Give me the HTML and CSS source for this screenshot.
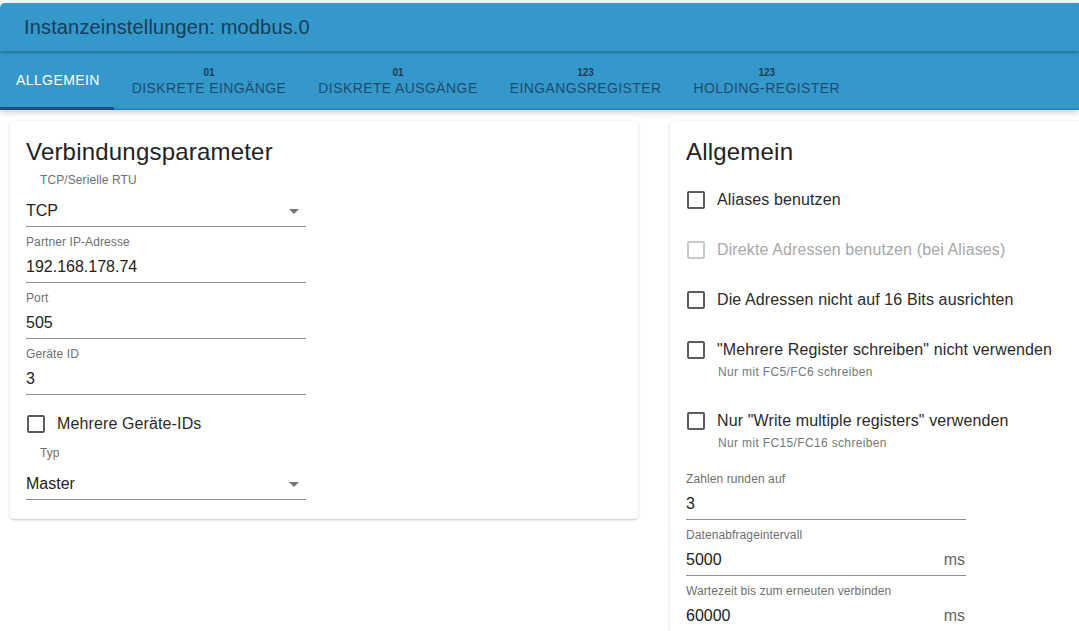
FILE: index.html
```html
<!DOCTYPE html>
<html lang="de">
<head>
<meta charset="utf-8">
<title>Instanzeinstellungen: modbus.0</title>
<link rel="stylesheet" href="styles.css">
</head>
<body>
<div class="page">
  <header class="appbar">Instanzeinstellungen: modbus.0</header>
  <nav class="tabs">
    <div class="tab active"><span class="tab-label">ALLGEMEIN</span></div>
    <div class="tab"><span class="tab-icon">01</span><span class="tab-label">DISKRETE EINGÄNGE</span></div>
    <div class="tab"><span class="tab-icon">01</span><span class="tab-label">DISKRETE AUSGÄNGE</span></div>
    <div class="tab"><span class="tab-icon">123</span><span class="tab-label">EINGANGSREGISTER</span></div>
    <div class="tab"><span class="tab-icon">123</span><span class="tab-label">HOLDING-REGISTER</span></div>
  </nav>
  <main class="content">
    <section class="card">
      <h2 class="card-title">Verbindungsparameter</h2>
      <div class="field select first">
        <div class="label">TCP/Serielle RTU</div>
        <div class="value">TCP<span class="arrow"></span></div>
      </div>
      <div class="field">
        <div class="label">Partner IP-Adresse</div>
        <div class="value">192.168.178.74</div>
      </div>
      <div class="field">
        <div class="label">Port</div>
        <div class="value">505</div>
      </div>
      <div class="field">
        <div class="label">Geräte ID</div>
        <div class="value">3</div>
      </div>
      <div class="check left-check">
        <span class="box"></span><span class="check-label">Mehrere Geräte-IDs</span>
      </div>
      <div class="field select after-check">
        <div class="label">Typ</div>
        <div class="value">Master<span class="arrow"></span></div>
      </div>
    </section>
    <section class="card">
      <h2 class="card-title">Allgemein</h2>
      <div class="checks">
        <div class="item">
          <div class="check"><span class="box"></span><span class="check-label">Aliases benutzen</span></div>
        </div>
        <div class="item disabled">
          <div class="check"><span class="box"></span><span class="check-label">Direkte Adressen benutzen (bei Aliases)</span></div>
        </div>
        <div class="item">
          <div class="check"><span class="box"></span><span class="check-label">Die Adressen nicht auf 16 Bits ausrichten</span></div>
        </div>
        <div class="item">
          <div class="check"><span class="box"></span><span class="check-label">"Mehrere Register schreiben" nicht verwenden</span></div>
          <div class="help">Nur mit FC5/FC6 schreiben</div>
        </div>
        <div class="item">
          <div class="check"><span class="box"></span><span class="check-label">Nur "Write multiple registers" verwenden</span></div>
          <div class="help">Nur mit FC15/FC16 schreiben</div>
        </div>
      </div>
      <div class="field after-checks">
        <div class="label">Zahlen runden auf</div>
        <div class="value">3</div>
      </div>
      <div class="field">
        <div class="label">Datenabfrageintervall</div>
        <div class="value">5000<span class="unit">ms</span></div>
      </div>
      <div class="field">
        <div class="label">Wartezeit bis zum erneuten verbinden</div>
        <div class="value">60000<span class="unit">ms</span></div>
      </div>
    </section>
  </main>
</div>
</body>
</html>
```
FILE: styles.css
```css
* { box-sizing: border-box; }
html, body {
  margin: 0;
  padding: 0;
  background: #ffffff;
  overflow: hidden;
}
body {
  font-family: "Liberation Sans", Arial, sans-serif;
  color: #222;
}
.page {
  padding-top: 3px;
  background: #f3f5f7;
  height: 631px;
}
.appbar {
  position: relative;
  z-index: 2;
  height: 48px;
  background: #3498cb;
  border-top-left-radius: 5px;
  color: #163d5b;
  font-size: 20px;
  letter-spacing: 0.15px;
  line-height: 48px;
  padding-left: 24px;
  box-shadow: 0 2px 3px rgba(0, 0, 0, 0.25);
}
.tabs {
  position: relative;
  z-index: 1;
  display: flex;
  height: 59px;
  background: #3498cb;
  border-bottom: 2px solid #2c86b6;
  box-shadow: 0 2px 6px rgba(0, 0, 0, 0.22);
}
.tab {
  display: flex;
  flex-direction: column;
  align-items: center;
  justify-content: center;
  padding: 3px 16px 0 16px;
  color: #1d4d70;
  position: relative;
}
.tab.active {
  color: #ffffff;
  padding-top: 1px;
}
.tab.active::after {
  content: "";
  position: absolute;
  left: 0;
  right: 2px;
  bottom: -2px;
  height: 3px;
  background: #1b4f7d;
}
.tab-icon {
  font-size: 10px;
  line-height: 12px;
  font-weight: bold;
  margin-bottom: 1px;
  color: #1d3d55;
}
.tab-label {
  font-size: 14px;
  line-height: 16px;
  letter-spacing: 0.4px;
}
.content {
  display: grid;
  grid-template-columns: 628px 628px;
  column-gap: 32px;
  padding: 11px 0 0 10px;
  background: #ffffff;
  height: 521px;
  align-items: start;
}
.card {
  background: #fff;
  border-radius: 4px;
  box-shadow: 0 1px 3px rgba(0, 0, 0, 0.18), 0 1px 1px rgba(0, 0, 0, 0.06);
  padding: 17px 16px 19px 16px;
}
.card-title {
  margin: 0;
  font-size: 24px;
  font-weight: normal;
  line-height: 28px;
  letter-spacing: 0.2px;
  color: #222;
}
.field {
  width: 280px;
  margin-top: 6px;
}
.field .label {
  font-size: 12px;
  line-height: 16px;
  padding-top: 1px;
  color: #6f6f6f;
  letter-spacing: 0.1px;
}
.field .value {
  position: relative;
  margin-top: 4px;
  font-size: 16px;
  line-height: 24px;
  color: #222;
  padding-top: 1px;
  padding-bottom: 3px;
  border-bottom: 1px solid #8f8f8f;
}
.field.select .label { padding-left: 14px; }
.field.select .value { margin-top: 10px; }
.field.first { margin-top: 5px; }
.field.after-check { margin-top: 8px; }
.field.after-checks { margin-top: 16px; }
.arrow {
  position: absolute;
  right: 7px;
  top: 11px;
  width: 0;
  height: 0;
  border-left: 5px solid transparent;
  border-right: 5px solid transparent;
  border-top: 5px solid #757575;
}
.unit {
  position: absolute;
  right: 1px;
  top: 1px;
  color: #666;
}
.check {
  display: flex;
  align-items: center;
  height: 24px;
}
.left-check { margin-top: 17px; }
.box {
  width: 18px;
  height: 18px;
  border: 2px solid #5c5c5c;
  border-radius: 2px;
  margin-left: 1px;
  margin-right: 12px;
  flex-shrink: 0;
}
.check-label {
  font-size: 16px;
  letter-spacing: 0.12px;
  color: #2a2a2a;
}
.checks { margin-top: 22px; }
.item + .item { margin-top: 26px; }
.item.disabled .box { border-color: #c8c8c8; }
.item.disabled .check-label { color: #a8a8a8; }
.help {
  font-size: 12px;
  line-height: 14px;
  color: #777;
  margin: 3px 0 0 32px;
  padding-bottom: 4px;
  letter-spacing: 0.35px;
}
```
